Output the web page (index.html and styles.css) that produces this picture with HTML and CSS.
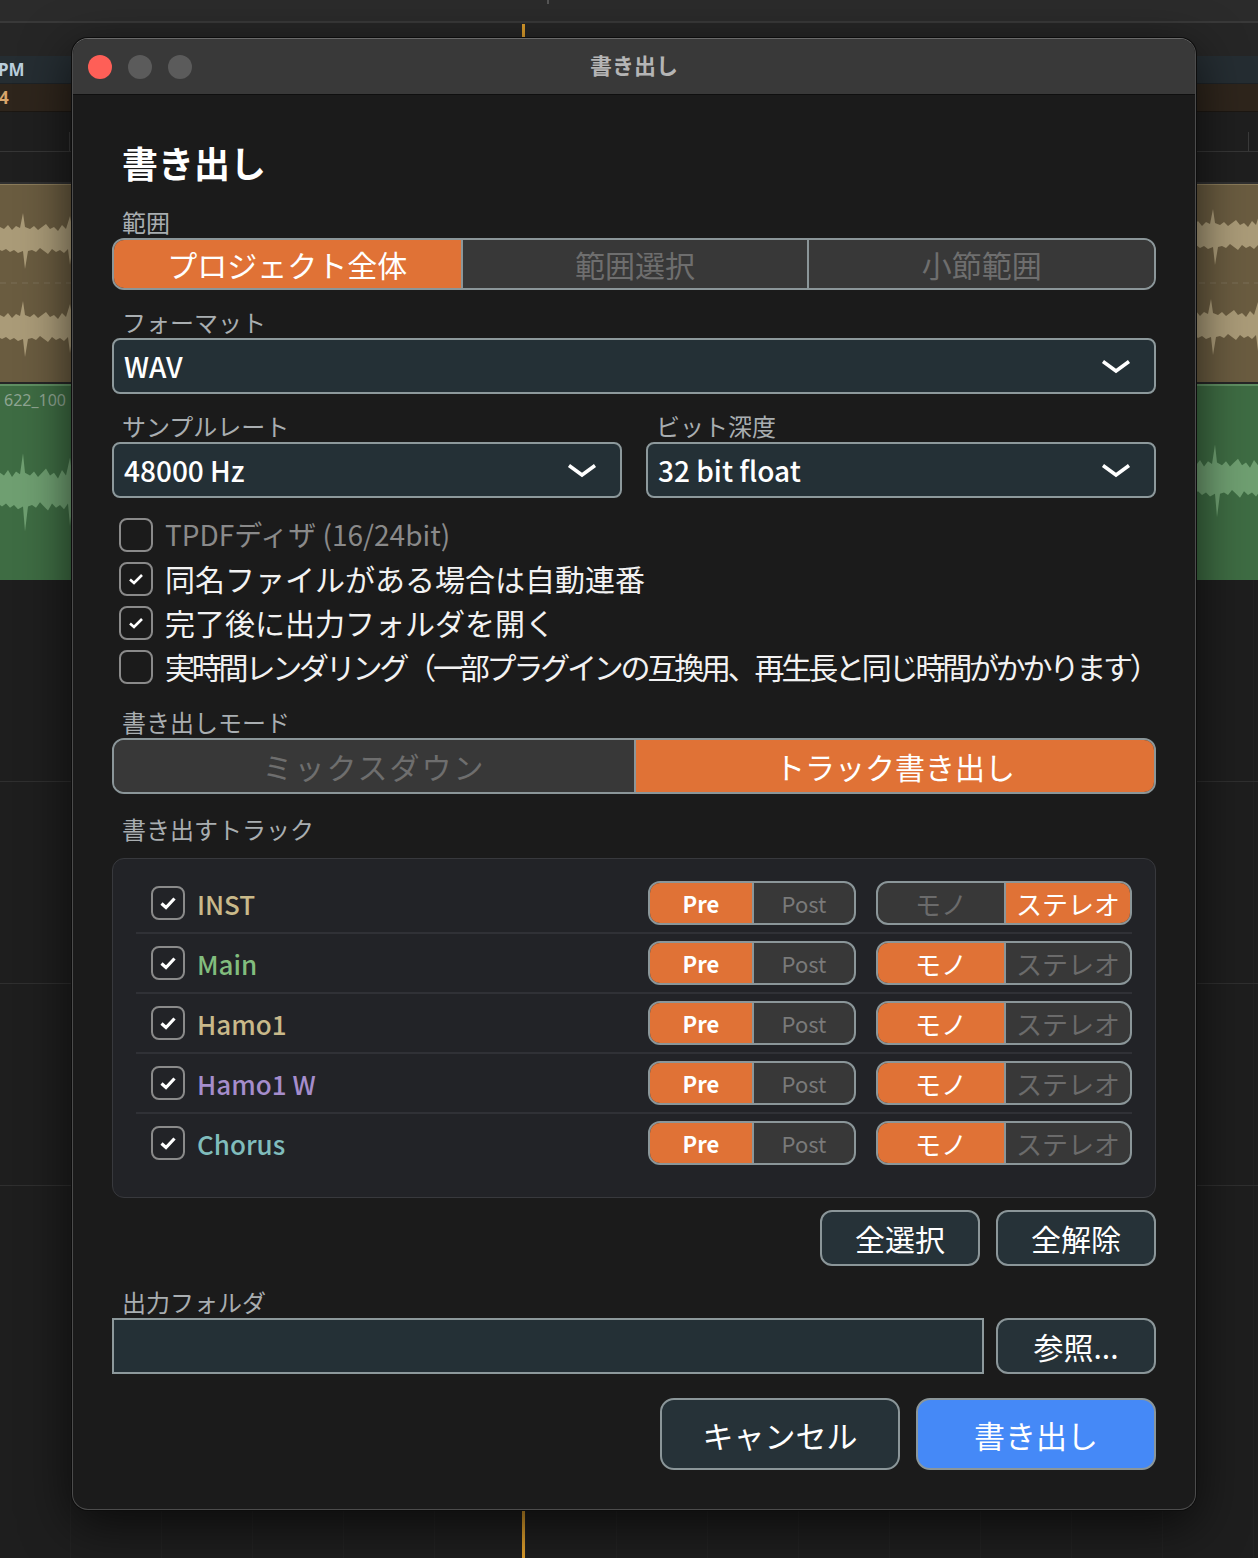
FILE: index.html
```html
<!DOCTYPE html>
<html lang="ja">
<head>
    <meta charset="UTF-8">
    <title>書き出し</title>
    <link rel="stylesheet" href="styles.css">
</head>
<body>
    <!-- arrange window behind the sheet -->
    <div class="desk">
        <div class="ruler"><span class="tick"></span></div>
        <div class="marker-lane"></div>
        <div class="lane tempo"><span class="lane-text">PM</span></div>
        <div class="lane meter"><span class="lane-text">4</span></div>
        <div class="lane blank"><span class="frame-l"></span><span class="frame-r"></span></div>
        <div class="lane blank thin"></div>
        <div class="clip tan">
            <svg class="wave" width="1258" height="198" viewBox="0 0 1258 198">
                <defs>
                    <polygon id="wv" points="0,42 4,44 8,40 12,45 16,41 20,43 23,28 25,42 30,44 34,41 38,45 42,42 46,39 50,44 54,42 58,46 62,40 66,44 70,31 72,43 72,66 70,80 68,64 64,68 60,65 56,67 52,64 48,69 44,66 40,63 36,67 32,65 28,66 25,84 23,66 18,68 14,65 10,67 6,64 2,66 0,65"/>
                </defs>
                <line class="zero" x1="0" y1="98" x2="1258" y2="98"/>
                <use href="#wv" class="tan-wave"/>
                <use href="#wv" class="tan-wave" transform="translate(0 88)"/>
                <use href="#wv" class="tan-wave" transform="translate(1190 -4)"/>
                <use href="#wv" class="tan-wave" transform="translate(1188 86)"/>
            </svg>
        </div>
        <div class="clip green">
            <span class="clip-name">622_100</span>
            <svg class="wave" width="1258" height="194" viewBox="0 0 1258 194">
                <line class="zero" x1="0" y1="98" x2="1258" y2="98"/>
                <use href="#wv" class="green-wave" transform="translate(0 28) scale(1 1.4)"/>
                <use href="#wv" class="green-wave" transform="translate(1192 22) scale(1 1.3)"/>
            </svg>
        </div>
        <div class="track-lane"></div>
        <div class="track-lane"></div>
        <div class="track-lane"></div>
        <div class="track-lane last"></div>
        <div class="playhead"></div>
    </div>

    <!-- export sheet -->
    <div class="dialog">
        <div class="titlebar">
            <div class="lights">
                <span class="light close"></span>
                <span class="light"></span>
                <span class="light"></span>
            </div>
            <div class="title">書き出し</div>
            <div></div>
        </div>

        <div class="dialog-body">
            <h1 class="heading">書き出し</h1>

            <div class="label">範囲</div>
            <div class="segmented three">
                <div class="seg on">プロジェクト全体</div>
                <div class="seg">範囲選択</div>
                <div class="seg">小節範囲</div>
            </div>

            <div class="label">フォーマット</div>
            <div class="select">
                <span>WAV</span>
                <svg class="chev" width="30" height="15" viewBox="0 0 30 15"><path d="M2 2.5 L15 12 L28 2.5"/></svg>
            </div>

            <div class="fields">
                <div class="field">
                    <div class="label">サンプルレート</div>
                    <div class="select">
                        <span>48000 Hz</span>
                        <svg class="chev" width="30" height="15" viewBox="0 0 30 15"><path d="M2 2.5 L15 12 L28 2.5"/></svg>
                    </div>
                </div>
                <div class="field">
                    <div class="label">ビット深度</div>
                    <div class="select">
                        <span>32 bit float</span>
                        <svg class="chev" width="30" height="15" viewBox="0 0 30 15"><path d="M2 2.5 L15 12 L28 2.5"/></svg>
                    </div>
                </div>
            </div>

            <div class="checks">
                <div class="check-row dim">
                    <span class="box"></span>
                    <span class="check-text">TPDFディザ (16/24bit)</span>
                </div>
                <div class="check-row">
                    <span class="box"><svg width="16" height="12" viewBox="0 0 16 12"><path d="M2 6.5 L6 10 L14 2"/></svg></span>
                    <span class="check-text">同名ファイルがある場合は自動連番</span>
                </div>
                <div class="check-row">
                    <span class="box"><svg width="16" height="12" viewBox="0 0 16 12"><path d="M2 6.5 L6 10 L14 2"/></svg></span>
                    <span class="check-text">完了後に出力フォルダを開く</span>
                </div>
                <div class="check-row">
                    <span class="box"></span>
                    <span class="check-text squeeze">実時間レンダリング（一部プラグインの互換用、再生長と同じ時間がかかります）</span>
                </div>
            </div>

            <div class="label mode">書き出しモード</div>
            <div class="segmented two">
                <div class="seg spaced">ミックスダウン</div>
                <div class="seg on">トラック書き出し</div>
            </div>

            <div class="label tracks">書き出すトラック</div>
            <div class="track-panel">
                <div class="track-row">
                    <span class="box big"><svg width="18" height="14" viewBox="0 0 18 14"><path d="M2.5 7.5 L7 11.5 L15.5 2.5"/></svg></span>
                    <span class="track-name inst">INST</span>
                    <div class="pill"><span class="opt on bold">Pre</span><span class="opt">Post</span></div>
                    <div class="pill wide"><span class="opt">モノ</span><span class="opt on">ステレオ</span></div>
                </div>
                <div class="track-row">
                    <span class="box big"><svg width="18" height="14" viewBox="0 0 18 14"><path d="M2.5 7.5 L7 11.5 L15.5 2.5"/></svg></span>
                    <span class="track-name main">Main</span>
                    <div class="pill"><span class="opt on bold">Pre</span><span class="opt">Post</span></div>
                    <div class="pill wide"><span class="opt on">モノ</span><span class="opt">ステレオ</span></div>
                </div>
                <div class="track-row">
                    <span class="box big"><svg width="18" height="14" viewBox="0 0 18 14"><path d="M2.5 7.5 L7 11.5 L15.5 2.5"/></svg></span>
                    <span class="track-name inst">Hamo1</span>
                    <div class="pill"><span class="opt on bold">Pre</span><span class="opt">Post</span></div>
                    <div class="pill wide"><span class="opt on">モノ</span><span class="opt">ステレオ</span></div>
                </div>
                <div class="track-row">
                    <span class="box big"><svg width="18" height="14" viewBox="0 0 18 14"><path d="M2.5 7.5 L7 11.5 L15.5 2.5"/></svg></span>
                    <span class="track-name hamow">Hamo1 W</span>
                    <div class="pill"><span class="opt on bold">Pre</span><span class="opt">Post</span></div>
                    <div class="pill wide"><span class="opt on">モノ</span><span class="opt">ステレオ</span></div>
                </div>
                <div class="track-row">
                    <span class="box big"><svg width="18" height="14" viewBox="0 0 18 14"><path d="M2.5 7.5 L7 11.5 L15.5 2.5"/></svg></span>
                    <span class="track-name chorus">Chorus</span>
                    <div class="pill"><span class="opt on bold">Pre</span><span class="opt">Post</span></div>
                    <div class="pill wide"><span class="opt on">モノ</span><span class="opt">ステレオ</span></div>
                </div>
            </div>

            <div class="button-row">
                <div class="btn">全選択</div>
                <div class="btn">全解除</div>
            </div>

            <div class="label folder">出力フォルダ</div>
            <div class="folder-row">
                <div class="path-input"></div>
                <div class="btn">参照...</div>
            </div>

            <div class="actions">
                <div class="btn big">キャンセル</div>
                <div class="btn big primary">書き出し</div>
            </div>
        </div>
    </div>
</body>
</html>
```

FILE: styles.css
```css
* {
    box-sizing: border-box;
}

html, body {
    margin: 0;
    padding: 0;
}

body {
    width: 1258px;
    height: 1558px;
    overflow: hidden;
    position: relative;
    background: #1e1e1e;
    font-family: "Noto Sans CJK JP", "Noto Sans", sans-serif;
}

/* ---- arrange window ---- */
.desk {
    position: relative;
    height: 100%;
}

.ruler {
    height: 23px;
    background: #2b2b2b;
    border-bottom: 2px solid #393939;
    position: relative;
}

.tick {
    position: absolute;
    left: 547px;
    top: 0;
    width: 2px;
    height: 4px;
    background: #555;
}

.marker-lane {
    height: 33px;
    background: #262626;
}

.lane {
    height: 28px;
    position: relative;
}

.lane.tempo {
    background: #252d32;
    border-bottom: 1px solid #1d2226;
}

.lane.meter {
    background: #2e251c;
    border-bottom: 1px solid #1c1712;
}

.lane-text {
    display: block;
    font-family: "Noto Sans", sans-serif;
    font-size: 17px;
    font-weight: 700;
    line-height: 27px;
    color: #b9cedc;
    margin-left: -2px;
}

.lane.meter .lane-text {
    color: #d9a66c;
    margin-left: -1px;
}

.lane.blank {
    height: 40px;
    background: #1f1f1f;
    border-bottom: 1px solid #363636;
}

.lane.blank.thin {
    height: 32px;
    border-bottom: 2px solid #303030;
}

.frame-l, .frame-r {
    position: absolute;
    top: 20px;
    bottom: 0;
    width: 1px;
    background: #3a3a3a;
}

.frame-l { left: 69px; }
.frame-r { left: 1248px; }

.clip {
    position: relative;
    overflow: hidden;
}

.clip.tan {
    height: 200px;
    background: #6a5c40;
    border-top: 1px solid #8a7b5a;
    border-bottom: 2px solid #262626;
}

.clip.green {
    height: 196px;
    background: #3e6c43;
    border-top: 2px solid #5f8f62;
}

.wave {
    display: block;
    position: absolute;
    left: 0;
    top: 0;
}

.zero {
    stroke: rgba(255, 255, 255, 0.12);
    stroke-width: 1;
    stroke-dasharray: 6 5;
}

.tan-wave {
    fill: #aa9b78;
}

.green-wave {
    fill: #6f9f71;
}

.clip-name {
    position: absolute;
    left: 4px;
    top: 3px;
    z-index: 1;
    font-family: "Noto Sans", sans-serif;
    font-size: 16px;
    color: #8fa592;
}

.track-lane {
    height: 202px;
    border-bottom: 1px solid #2f2f2f;
    background-color: #1e1e1e;
    background-image: repeating-linear-gradient(90deg, transparent 0 70px, #222 70px 71px, transparent 71px 91px);
}

.track-lane.last {
    height: 376px;
    border-bottom: 0;
}

.playhead {
    position: absolute;
    left: 522px;
    top: 24px;
    bottom: 0;
    width: 3px;
    background: #d99b2b;
}

/* ---- sheet ---- */
.dialog {
    position: absolute;
    left: 72px;
    top: 38px;
    width: 1124px;
    background: #1b1b1b;
    border: 1px solid #4c4c4c;
    border-top-color: #6a6a6a;
    border-radius: 16px;
    overflow: hidden;
    box-shadow: 0 0 0 1px #0d0d0d, 0 14px 50px rgba(0, 0, 0, 0.65);
    z-index: 2;
}

.titlebar {
    height: 56px;
    background: #393939;
    border-bottom: 1px solid #0f0f0f;
    display: grid;
    grid-template-columns: 1fr auto 1fr;
    align-items: center;
    padding: 0 15px;
}

.lights {
    display: flex;
    gap: 16px;
}

.light {
    width: 24px;
    height: 24px;
    border-radius: 50%;
    background: #5b5b5b;
}

.light.close {
    background: #fe5f57;
}

.title {
    font-size: 22px;
    font-weight: 700;
    color: #b5b5b5;
    margin-top: -5px;
}

.dialog-body {
    padding: 45px 39px 39px;
}

.heading {
    margin: 0 0 0 10px;
    font-size: 36px;
    line-height: 44px;
    font-weight: 700;
    color: #fff;
}

.label {
    margin: 18px 0 0 10px;
    font-size: 24px;
    line-height: 27px;
    padding-bottom: 3px;
    color: #a9aeb1;
}

.heading + .label { margin-top: 24px; }
.label.mode { margin-top: 19px; }
.label.tracks { margin-top: 21px; margin-bottom: 13px; }
.label.folder { margin-top: 22px; }

/* segmented controls */
.segmented {
    display: grid;
    border: 2px solid #8b9699;
    border-radius: 12px;
    overflow: hidden;
    background: #383838;
}

.segmented.three {
    grid-template-columns: repeat(3, 1fr);
    height: 52px;
}

.segmented.two {
    grid-template-columns: 1fr 1fr;
    height: 56px;
}

.seg {
    display: flex;
    align-items: center;
    justify-content: center;
    font-size: 30px;
    color: #6e6e6e;
    background: #383838;
}

.seg + .seg {
    border-left: 2px solid #8b9699;
}

.seg.on {
    background: #e07236;
    color: #fff;
}

.seg.spaced {
    letter-spacing: 2px;
}

/* dropdowns */
.select {
    height: 56px;
    background: #243036;
    border: 2px solid #8d999c;
    border-radius: 8px;
    display: flex;
    align-items: center;
    justify-content: space-between;
    padding: 0 23px 0 10px;
    font-size: 28px;
    font-weight: 500;
    color: #fff;
}

.chev path {
    fill: none;
    stroke: #fff;
    stroke-width: 3.5;
}

.fields {
    display: grid;
    grid-template-columns: 1fr 1fr;
    gap: 24px;
    margin-top: 18px;
}

.field .label {
    margin-top: 0;
}

/* check boxes */
.checks {
    margin-top: 15px;
}

.check-row {
    height: 44px;
    display: flex;
    align-items: center;
    gap: 12px;
    padding-left: 7px;
}

.box {
    flex: none;
    width: 34px;
    height: 34px;
    border: 2px solid #8a8a8a;
    border-radius: 8px;
    display: flex;
    align-items: center;
    justify-content: center;
}

.box path {
    fill: none;
    stroke: #fff;
    stroke-width: 2.6;
}

.box.big path {
    stroke-width: 3.2;
}

.check-text {
    font-size: 30px;
    color: #f2f2f2;
    white-space: nowrap;
    margin-top: -2px;
}

.check-row.dim .check-text {
    color: #8a8a8a;
    font-size: 28px;
}

.check-text.squeeze {
    letter-spacing: -3.2px;
}

/* track list */
.track-panel {
    height: 340px;
    background: #222327;
    border: 1px solid #38393d;
    border-radius: 12px;
    padding: 15px 23px;
}

.track-row {
    height: 58px;
    display: flex;
    align-items: center;
    padding-left: 15px;
}

.track-row + .track-row {
    height: 60px;
    border-top: 2px solid #303136;
}

.track-name {
    flex: 1;
    margin-left: 12px;
    font-size: 26px;
    font-weight: 500;
}

.track-name.inst { color: #c9b98a; }
.track-name.main { color: #82bd7e; }
.track-name.hamow { color: #a58dcc; }
.track-name.chorus { color: #80bcbc; }

.pill {
    width: 208px;
    height: 44px;
    border: 2px solid #8b9699;
    border-radius: 12px;
    overflow: hidden;
    display: grid;
    grid-template-columns: 1fr 1fr;
    background: #383838;
}

.pill.wide {
    width: 256px;
    margin-left: 20px;
}

.opt {
    display: flex;
    align-items: center;
    justify-content: center;
    font-size: 22px;
    color: #7a7a7a;
}

.pill.wide .opt {
    font-size: 26px;
    color: #6b6b6b;
}

.opt + .opt {
    border-left: 2px solid #8b9699;
}

.pill .opt.on {
    background: #e07236;
    color: #fff;
}

.opt.bold {
    font-weight: 700;
}

/* buttons */
.button-row, .actions {
    display: flex;
    justify-content: flex-end;
    gap: 16px;
}

.button-row {
    margin-top: 12px;
}

.btn {
    flex: none;
    width: 160px;
    height: 56px;
    background: #263238;
    border: 2px solid #8b9699;
    border-radius: 12px;
    display: flex;
    align-items: center;
    justify-content: center;
    font-size: 30px;
    color: #fff;
}

.folder-row {
    display: flex;
    gap: 12px;
}

.path-input {
    flex: 1;
    height: 56px;
    background: #243036;
    border: 2px solid #8d999c;
}

.actions {
    margin-top: 24px;
}

.btn.big {
    width: 240px;
    height: 72px;
    border-radius: 14px;
    font-size: 31px;
}

.btn.primary {
    background: #4589f7;
}
```
